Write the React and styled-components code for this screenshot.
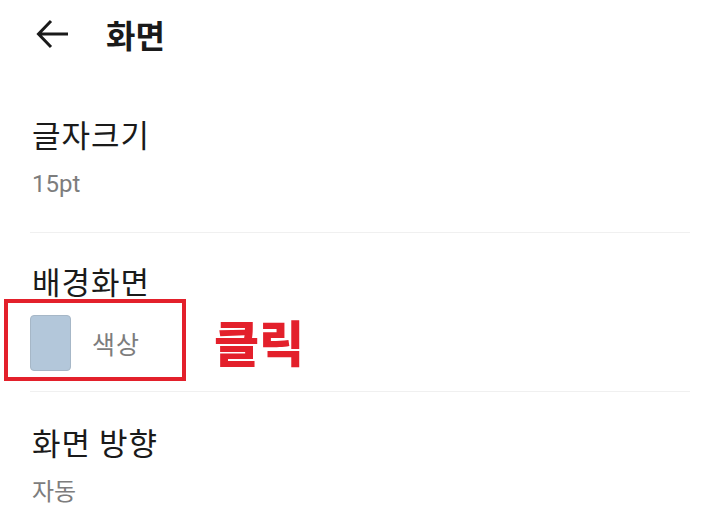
import React from "react";
import styled, { createGlobalStyle } from "styled-components";

const Global = createGlobalStyle`
  html, body { margin: 0; padding: 0; background: #fff; }
  body { font-family: "Noto Sans CJK KR", "Noto Sans", sans-serif; }
`;

const Page = styled.div`
  width: 720px;
  height: 515px;
  background: #fff;
  position: relative;
  overflow: hidden;
`;

const Header = styled.div`
  display: flex;
  align-items: center;
  height: 68px;
  padding-left: 36px;
  gap: 36px;
`;

const Title = styled.h1`
  margin: 0;
  font-size: 32px;
  font-weight: 700;
  color: #1a1a1a;
  line-height: 1;
`;

const Section = styled.div`
  margin: 0 30px;
  padding: ${(p) => p.$pad};
  border-bottom: ${(p) => (p.$last ? "none" : "1px solid #f0f0f0")};
`;

const Label = styled.div`
  font-size: 31px;
  letter-spacing: 1px;
  color: #1a1a1a;
  line-height: 1;
  padding-left: 2px;
`;

const Sub = styled.div`
  margin-top: ${(p) => p.$mt}px;
  font-family: ${(p) => (p.$latin ? '"Roboto", "Noto Sans CJK KR", sans-serif' : '"Noto Sans CJK KR", sans-serif')};
  font-size: 24px;
  color: #7d7d7d;
  line-height: 1;
  padding-left: 2px;
`;

const ColorRow = styled.div`
  display: flex;
  align-items: center;
  gap: 21px;
  margin-top: 19px;
  height: 56px;
`;

const Swatch = styled.div`
  width: 41px;
  height: 56px;
  border-radius: 4px;
  background: #b3c7da;
  border: 1px solid #a6b7c7;
  box-sizing: border-box;
`;

const SwatchText = styled.span`
  font-size: 25px;
  letter-spacing: 1px;
  color: #7d7d7d;
  line-height: 1;
`;

const Highlight = styled.div`
  position: absolute;
  left: 4px;
  top: 299px;
  width: 182px;
  height: 82px;
  border: 4px solid #e3202b;
  box-sizing: border-box;
  pointer-events: none;
`;

const ClickNote = styled.div`
  position: absolute;
  left: 214px;
  top: 312px;
  font-size: 49px;
  font-weight: 900;
  color: #e3202b;
  line-height: 1.2;
`;

const BackIcon = () => (
  <svg width="34" height="32" viewBox="0 0 34 32" fill="none">
    <path d="M32 16H3M15 3L2.5 16L15 29" stroke="#1a1a1a" strokeWidth="3" strokeLinecap="butt" strokeLinejoin="miter" />
  </svg>
);

export default function App() {
  return (
    <Page>
      <Global />
      <Header>
        <BackIcon />
        <Title>화면</Title>
      </Header>
      <Section $pad="50px 0 36px">
        <Label>글자크기</Label>
        <Sub $mt={23} $latin>15pt</Sub>
      </Section>
      <Section $pad="32px 0 20px">
        <Label>배경화면</Label>
        <ColorRow>
          <Swatch />
          <SwatchText>색상</SwatchText>
        </ColorRow>
      </Section>
      <Section $pad="34px 0 0" $last>
        <Label>화면 방향</Label>
        <Sub $mt={21}>자동</Sub>
      </Section>
      <Highlight />
      <ClickNote>클릭</ClickNote>
    </Page>
  );
}
